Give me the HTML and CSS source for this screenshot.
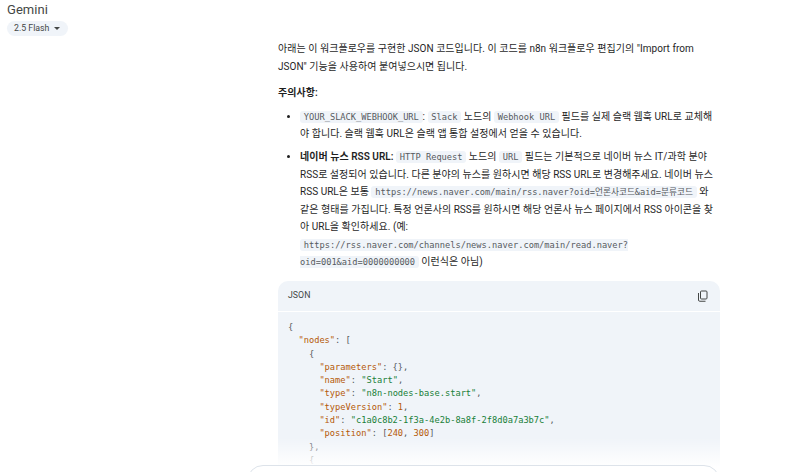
FILE: index.html
```html
<!DOCTYPE html>
<html lang="ko">
<head>
<meta charset="utf-8">
<title>Gemini</title>
<link rel="stylesheet" href="styles.css">
</head>
<body>
<div class="page">
  <header class="top">
    <div class="brand">Gemini</div>
    <button class="model">2.5 Flash <span class="caret"></span></button>
  </header>
  <main class="chat">
    <p class="para">아래는 이 워크플로우를 구현한 JSON 코드입니다. 이 코드를 n8n 워크플로우 편집기의 "Import from JSON" 기능을 사용하여 붙여넣으시면 됩니다.</p>
    <p class="para"><b>주의사항:</b></p>
    <ul class="list">
      <li><code>YOUR_SLACK_WEBHOOK_URL</code>: <code>Slack</code> 노드의 <code>Webhook URL</code> 필드를 실제 슬랙 웹훅 URL로 교체해야 합니다. 슬랙 웹훅 URL은 슬랙 앱 통합 설정에서 얻을 수 있습니다.</li>
      <li><b>네이버 뉴스 RSS URL:</b> <code>HTTP Request</code> 노드의 <code>URL</code> 필드는 기본적으로 네이버 뉴스 IT/과학 분야 RSS로 설정되어 있습니다. 다른 분야의 뉴스를 원하시면 해당 RSS URL로 변경해주세요. 네이버 뉴스 RSS URL은 보통 <code>https://news.naver.com/main/rss.naver?oid=언론사코드&amp;aid=분류코드</code> 와 같은 형태를 가집니다. 특정 언론사의 RSS를 원하시면 해당 언론사 뉴스 페이지에서 RSS 아이콘을 찾아 URL을 확인하세요. (예: <code>https://rss.naver.com/channels/news.naver.com/main/read.naver?oid=001&amp;aid=0000000000</code> 이런식은 아님)</li>
    </ul>
    <section class="block">
      <div class="block-head">
        <span>JSON</span>
        <svg class="copy" width="11" height="12" viewBox="0 0 22 24" fill="none" stroke="#444746" stroke-width="2"><rect x="7" y="2" width="13" height="16" rx="2"/><path d="M3 6v14a2.5 2.5 0 0 0 2.5 2.5H17"/></svg>
      </div>
<pre class="code">{
  <i class="k">"nodes"</i>: [
    {
      <i class="k">"parameters"</i>: {},
      <i class="k">"name"</i>: <i class="s">"Start"</i>,
      <i class="k">"type"</i>: <i class="s">"n8n-nodes-base.start"</i>,
      <i class="k">"typeVersion"</i>: <i class="n">1</i>,
      <i class="k">"id"</i>: <i class="s">"c1a0c8b2-1f3a-4e2b-8a8f-2f8d0a7a3b7c"</i>,
      <i class="k">"position"</i>: [<i class="n">240</i>, <i class="n">300</i>]
    },
    {
</pre>
    </section>
  </main>
  <div class="fade"></div>
  <div class="composer"></div>
</div>
</body>
</html>
```
FILE: styles.css
```css
* { box-sizing: border-box; }
html, body { margin: 0; height: 100%; overflow: hidden; background: #fff; }
body { font-family: "Roboto", "Noto Sans CJK KR", sans-serif; color: #1f1f1f; font-size: 10px; line-height: 17.5px; letter-spacing: .03px; }
.page { position: relative; height: 472px; overflow: hidden; }
.top { padding: 2px 0 0 7px; display: flex; flex-direction: column; align-items: flex-start; }
.brand { font-size: 13px; line-height: 16px; color: #444746; }
.model { margin-top: 3px; height: 15px; padding: 0 8px 0 7px; border: 0; border-radius: 8px; background: #f0f4f9; color: #444746; font: 8.75px/15px "Roboto", sans-serif; display: flex; align-items: center; gap: 5px; }
.caret { width: 0; height: 0; border: 3.5px solid transparent; border-top: 3.5px solid #444746; border-bottom: 0; }
.chat { width: 442px; margin: 4px 0 0 278px; }
.para { margin: 0 0 9px; }
.list { margin: -3px 0 0; padding: 0 0 0 22px; }
.list li { margin-bottom: 5.5px; }
b { font-weight: 600; }
code { font-family: "DejaVu Sans Mono", "Noto Sans CJK KR", monospace; font-size: 8.7px; line-height: 1; letter-spacing: 0; color: #575b5f; background: #f0f4f9; border-radius: 3px; padding: 1px 3.75px; word-break: break-word; }
.block { margin-top: 10px; }
.block-head { height: 30px; background: #f0f4f9; border-radius: 10px 10px 0 0; padding: 0 12px 0 10px; display: flex; align-items: center; justify-content: space-between; font-size: 8.75px; color: #444746; }
.code { margin: 1px 0 0; height: 200px; background: #f0f4f9; padding: 9.5px 10px; font: 8.7px/13.3px "DejaVu Sans Mono", monospace; letter-spacing: 0; color: #575b5f; }
.code i { font-style: normal; }
.k { color: #b55908; }
.s { color: #188038; }
.n { color: #b55908; }
.fade { position: absolute; left: 0; right: 0; bottom: 0; height: 34px; background: linear-gradient(rgba(255,255,255,0), #fff 85%); }
.composer { position: absolute; left: 247px; width: 473px; top: 465px; height: 40px; background: #fff; border: 1px solid #dde3ea; border-radius: 16px; }
```
